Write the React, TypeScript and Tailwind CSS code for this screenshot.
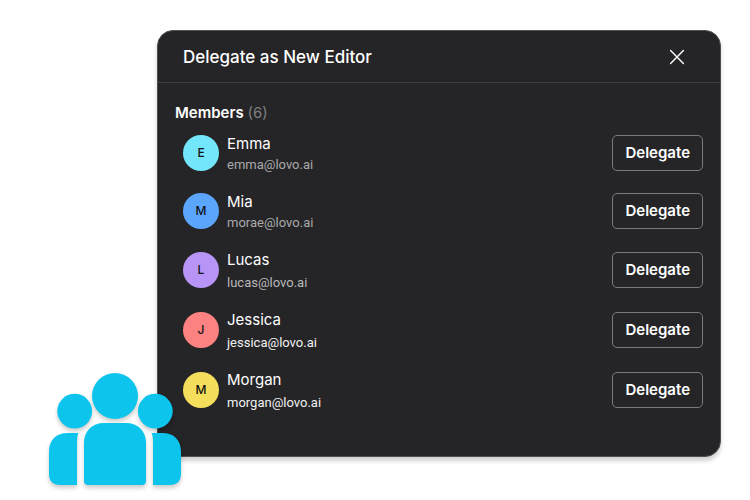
const members = [
  { name: 'Emma', email: 'emma@lovo.ai', avatar: 'bg-[#73e6fb]', text: 'text-[#a9a9ab]', gap: 'gap-0' },
  { name: 'Mia', email: 'morae@lovo.ai', avatar: 'bg-[#5ba5fc]', text: 'text-[#a9a9ab]', gap: 'gap-0' },
  { name: 'Lucas', email: 'lucas@lovo.ai', avatar: 'bg-[#b794f6]', text: 'text-[#b8b8ba]', gap: 'gap-0.5' },
  { name: 'Jessica', email: 'jessica@lovo.ai', avatar: 'bg-[#fc8181]', text: 'text-[#f1f1f2]', gap: 'gap-0.5' },
  { name: 'Morgan', email: 'morgan@lovo.ai', avatar: 'bg-[#f5de5c]', text: 'text-[#f1f1f2]', gap: 'gap-0.5' },
];

function CloseIcon() {
  return (
    <svg width="16" height="16" viewBox="0 0 16 16" fill="none" stroke="currentColor" strokeWidth="1.4" strokeLinecap="round" aria-hidden="true">
      <path d="M1.6 1.6 14.4 14.4M14.4 1.6 1.6 14.4" />
    </svg>
  );
}

function TeamIcon({ className }: { className?: string }) {
  return (
    <svg className={className} width="133" height="113" viewBox="0 0 133 113" fill="#0dc5ec" aria-hidden="true">
      <circle cx="66" cy="23" r="23" />
      <circle cx="25.7" cy="38.2" r="17.4" />
      <circle cx="106.3" cy="38.2" r="17.4" />
      <path d="M55 50H77C89 50 97 58 97 70V108Q97 112 93 112H39Q35 112 35 108V70C35 58 43 50 55 50Z" />
      <path d="M19 60H29.5Q28 63 28 69V112H11C4 112 0 108 0 101V79C0 67 7 60 19 60Z" />
      <path d="M113 60H102.5Q104 63 104 69V112H121C128 112 132 108 132 101V79C132 67 125 60 113 60Z" />
    </svg>
  );
}

export default function App() {
  return (
    <div className="min-h-screen bg-white pt-[30px] pr-[29px] pb-[43px] pl-[157px] font-['Inter',sans-serif]">
      <div className="relative">
        <section className="rounded-[16px] border border-[#505052] bg-[#252527] pb-11 text-white shadow-[0_4px_4px_rgba(0,0,0,0.18)]">
          {/* Header */}
          <header className="flex h-[52px] items-center justify-between border-b border-[#3e3e40] pr-[35px] pl-[25px]">
            <h1 className="text-[17px] leading-6 font-medium">Delegate as New Editor</h1>
            <button type="button" aria-label="Close" className="p-0">
              <CloseIcon />
            </button>
          </header>

          {/* Member list */}
          <div className="px-[17px] pt-[18px]">
            <h2 className="text-[15px] leading-6 font-semibold">
              Members <span className="font-normal text-[#7f7f81]">(6)</span>
            </h2>
            <ul className="mt-[7px] flex flex-col gap-4">
              {members.map((m) => (
                <li key={m.name} className="flex items-center pl-2">
                  <span className={`flex size-9 items-center justify-center rounded-full text-xs font-medium text-[#111113] ${m.avatar}`}>
                    {m.name[0]}
                  </span>
                  <div className={`ml-2 flex flex-col ${m.gap}`}>
                    <span className="text-[15px] leading-6">{m.name}</span>
                    <span className={`font-['Roboto',sans-serif] text-[13px] leading-[18px] ${m.text}`}>{m.email}</span>
                  </div>
                  <button type="button" className="ml-auto h-9 rounded-[5px] border border-[#7b7b7d] px-3 text-[15px] font-semibold">
                    Delegate
                  </button>
                </li>
              ))}
            </ul>
          </div>
        </section>

        <TeamIcon className="absolute -bottom-[29px] -left-[108px] overflow-visible drop-shadow-[0_3px_2px_rgba(0,0,0,0.2)]" />
      </div>
    </div>
  );
}
